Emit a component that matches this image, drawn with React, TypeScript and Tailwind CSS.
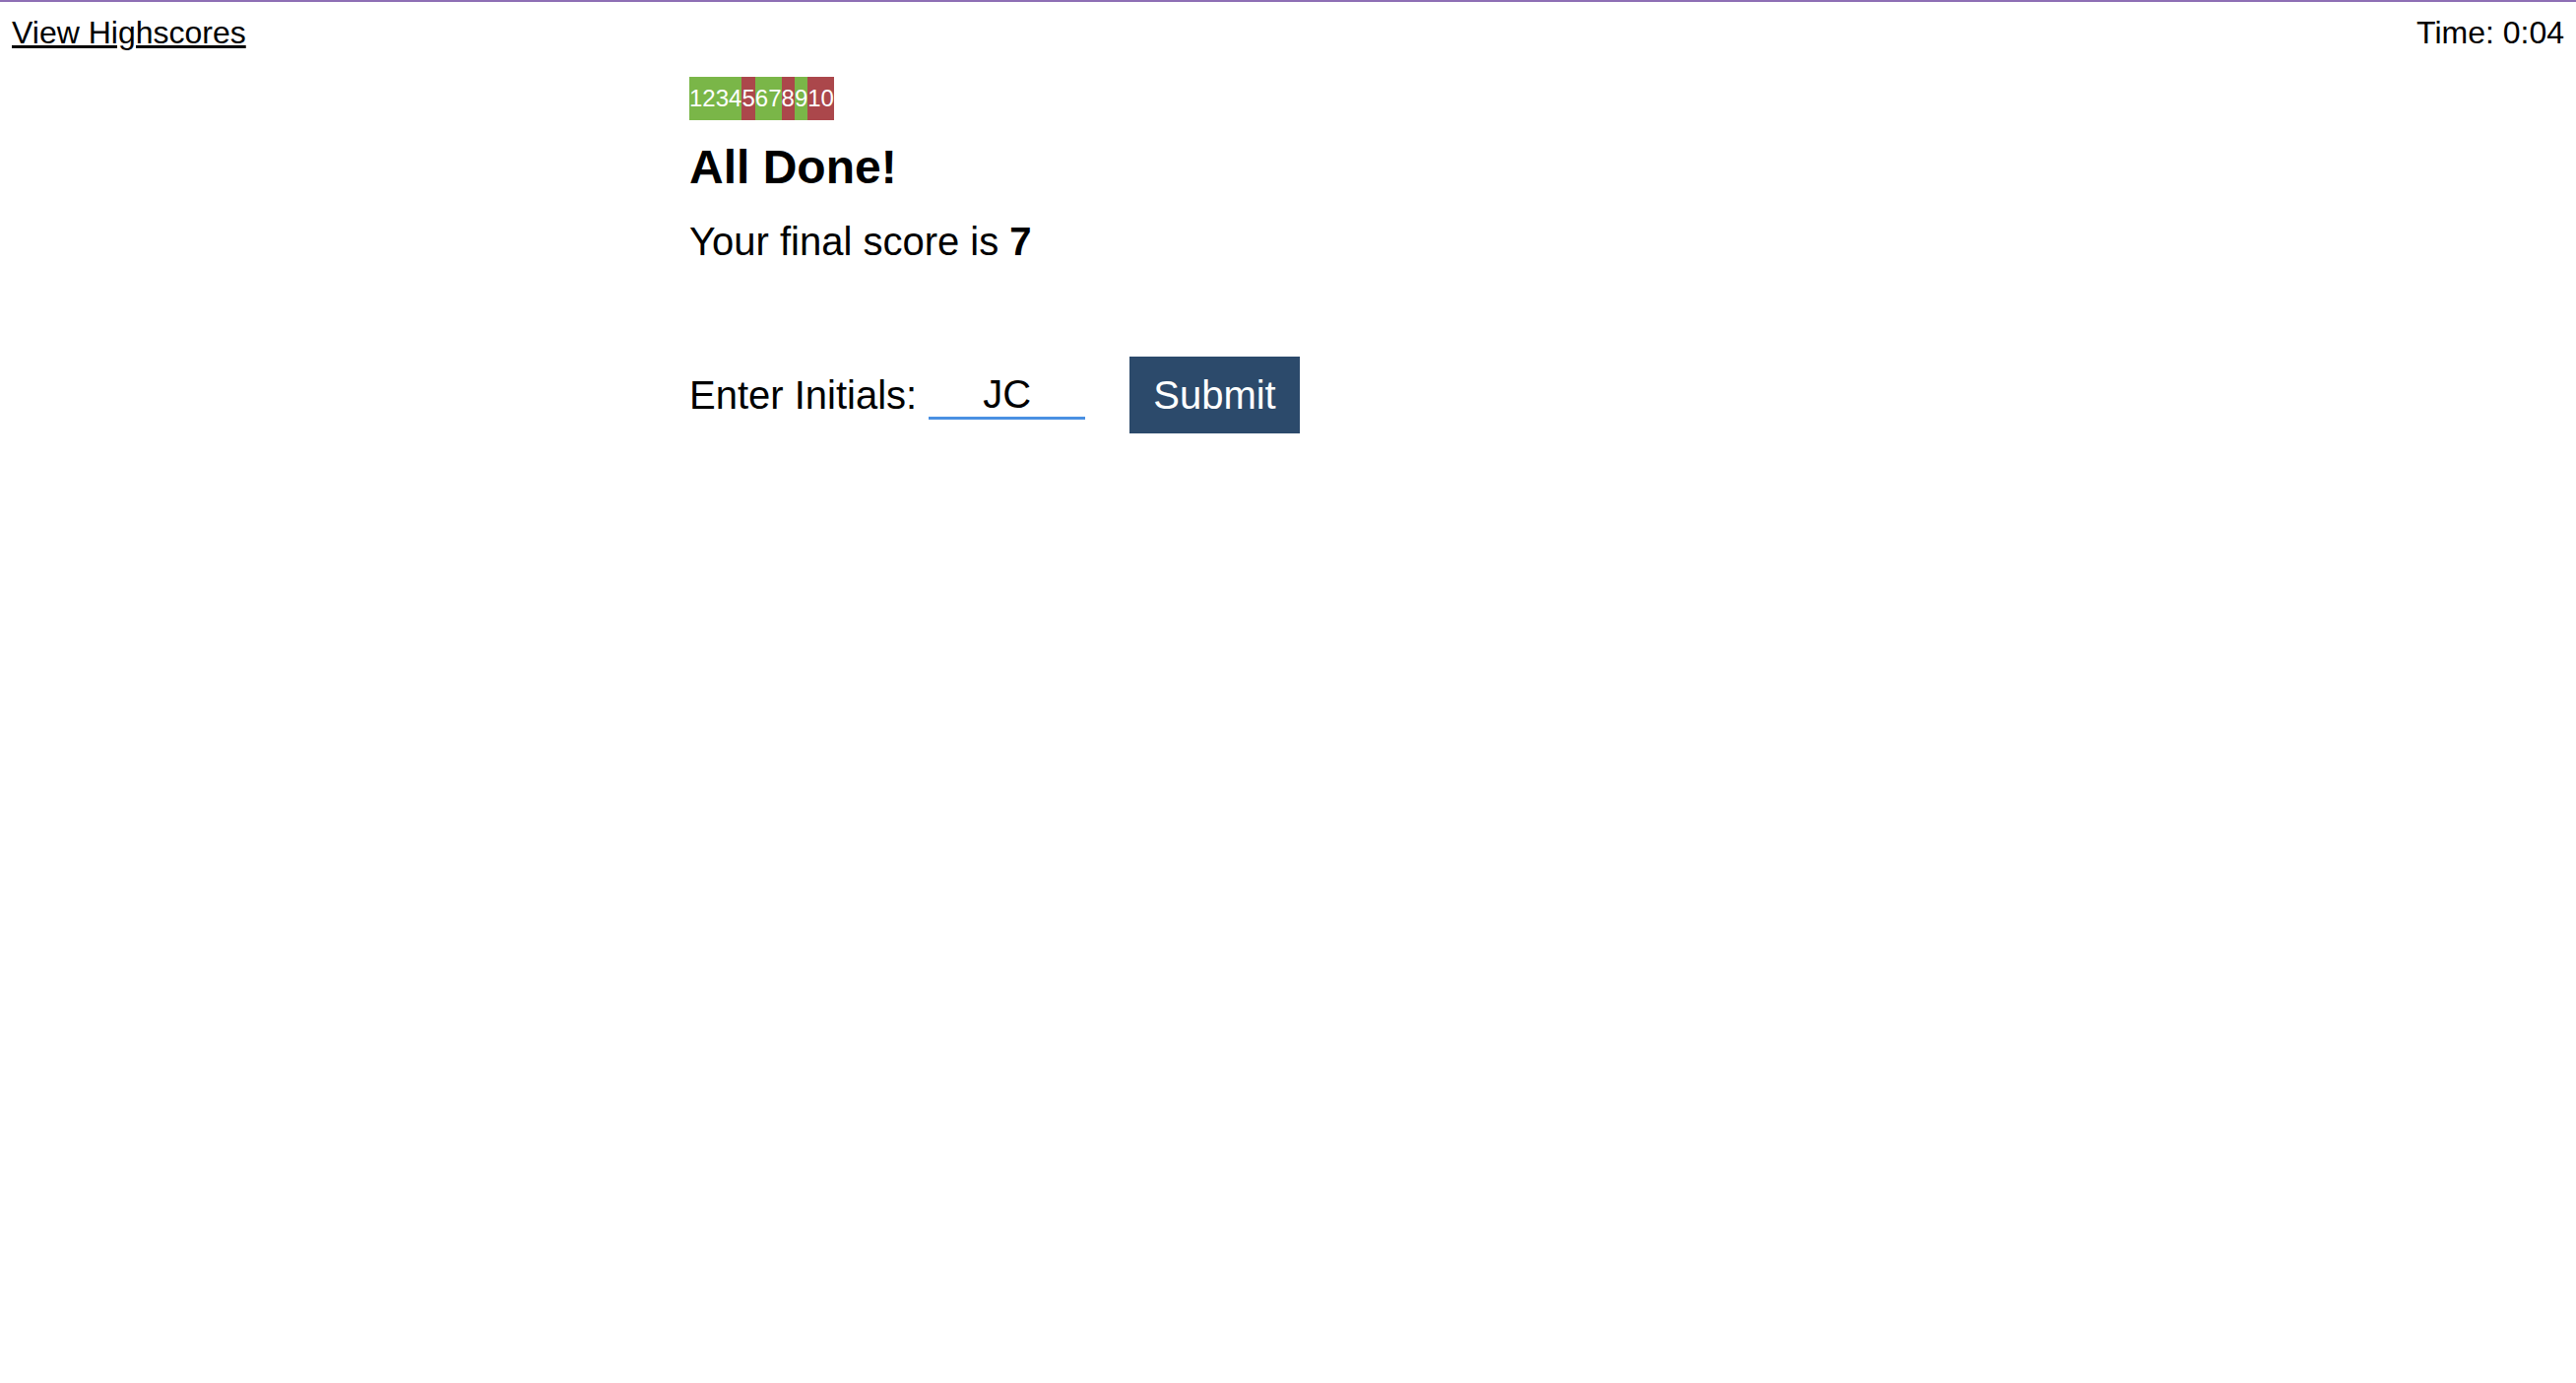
const results = [true, true, true, true, false, true, true, false, true, false];

const App = () => {
  return (
    <div className="min-h-screen bg-white border-t-2 border-[#8e6fb5] font-['Liberation_Sans',Arial,sans-serif] text-black">
      {/* top bar */}
      <header className="flex justify-between px-3 pt-[13px] text-[32px] leading-[37px]">
        <a href="#" className="underline">
          View Highscores
        </a>
        <span>Time: 0:04</span>
      </header>

      <main className="mx-auto w-[1216px]">
        {/* question progress */}
        <div className="mt-[26px] flex w-fit text-[24px] leading-[28px] text-white">
          {results.map((ok, i) => (
            <span key={i} className={ok ? "bg-[#7ab648] py-2" : "bg-[#ab474b] py-2"}>
              {i + 1}
            </span>
          ))}
        </div>

        <h1 className="mt-[20px] text-[48px] font-bold leading-[55px]">All Done!</h1>
        <p className="mt-[25px] text-[40px] leading-[46px]">
          Your final score is <b>7</b>
        </p>

        <form className="mt-[94px] flex items-center text-[40px] leading-[46px]" onSubmit={(e) => e.preventDefault()}>
          <label htmlFor="initials">Enter Initials:</label>
          <input
            id="initials"
            defaultValue="JC"
            className="ml-3 w-[159px] border-b-[3px] border-[#4a90e2] text-center outline-none"
          />
          <button type="submit" className="ml-[45px] bg-[#2c4a6b] px-6 py-4 text-white">
            Submit
          </button>
        </form>
      </main>
    </div>
  );
};

export default App;
